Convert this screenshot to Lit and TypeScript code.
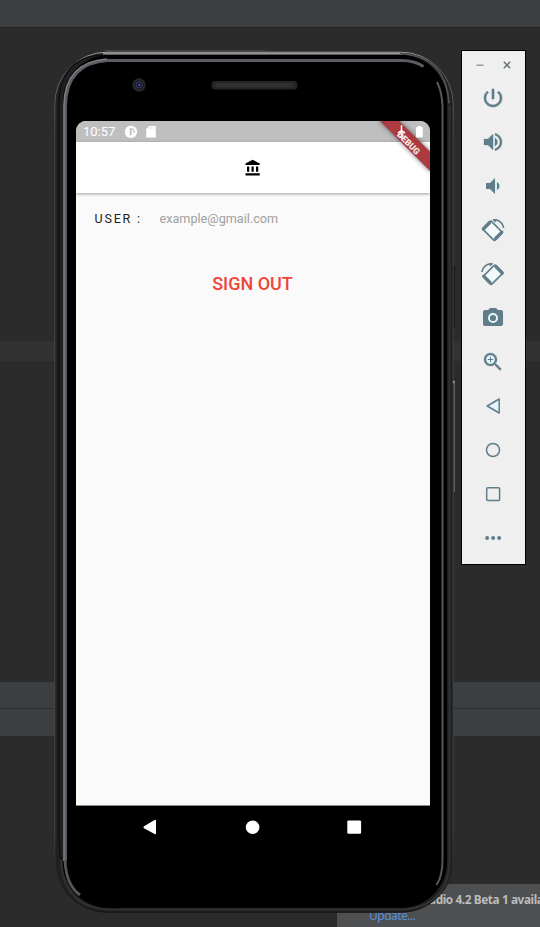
import { LitElement, html, css, svg } from "lit";
import { customElement, property } from "lit/decorators.js";

const ICONS: Record<string, unknown> = {
  power: svg`<path stroke="currentColor" stroke-width=".6" d="M13 3h-2v10h2V3zm4.83 2.17l-1.42 1.42C17.99 7.86 19 9.81 19 12c0 3.87-3.13 7-7 7s-7-3.13-7-7c0-2.19 1.01-4.14 2.58-5.42L6.17 5.17C4.23 6.82 3 9.26 3 12c0 4.97 4.03 9 9 9s9-4.03 9-9c0-2.74-1.23-5.18-3.17-6.83z"/>`,
  volumeUp: svg`<path fill="#d5f1fb" d="M12 5h2v14h-2z"/><path stroke="currentColor" stroke-width=".3" d="M3 9v6h4l5 5V4L7 9H3zm13.5 3c0-1.77-1.02-3.29-2.5-4.03v8.05c1.48-.73 2.5-2.25 2.5-4.02zM14 3.23v2.06c2.89.86 5 3.54 5 6.71s-2.11 5.85-5 6.71v2.06c4.01-.91 7-4.49 7-8.77s-2.99-7.86-7-8.77z"/>`,
  volumeDown: svg`<path fill="#d5f1fb" d="M14 7h2v10h-2z"/><path d="M18.5 12c0-1.77-1.02-3.29-2.5-4.03v8.05c1.48-.73 2.5-2.25 2.5-4.02zM5 9v6h4l5 5V4L9 9H5z"/>`,
  rotateLeft: svg`<g fill="none" stroke="currentColor"><rect x="3" y="6.9" width="17" height="11.6" rx="1.6" transform="rotate(45 11.5 12.7)" fill="#f4fafc" stroke-width="1.7"/><path d="M2.3 11.2 8.6 4.9M14.6 20.5 20.9 14.2" stroke-width="3.2" stroke-linecap="round"/><path d="M12.4 1.7c5.4-.3 9.6 3.4 10.3 8.3" stroke-width="1.6"/><path d="M11.3 1.2l4.6.4-1.6 2.9z" fill="currentColor" stroke="none"/></g>`,
  camera: svg`<circle cx="12" cy="12" r="5.6" fill="#e9f8fd"/><path fill-rule="evenodd" d="M9 2 7.17 4H4c-1.1 0-2 .9-2 2v12c0 1.1.9 2 2 2h16c1.1 0 2-.9 2-2V6c0-1.1-.9-2-2-2h-3.17L15 2H9zm3 15a5 5 0 1 1 0-10 5 5 0 0 1 0 10z"/><circle cx="12" cy="12" r="3.1"/>`,
  zoom: svg`<circle cx="9.5" cy="9.5" r="5" fill="#e2f5fc"/><path stroke="currentColor" stroke-width=".3" d="M15.5 14h-.79l-.28-.27C15.41 12.59 16 11.11 16 9.5 16 5.91 13.09 3 9.5 3S3 5.91 3 9.5 5.91 16 9.5 16c1.61 0 3.09-.59 4.23-1.57l.27.28v.79l5 4.99L20.49 19l-4.99-5zm-6 0C7.01 14 5 11.99 5 9.5S7.01 5 9.5 5 14 7.01 14 9.5 11.99 14 9.5 14z"/><path d="M9.5 6.8v5.4M6.8 9.5h5.4" stroke="currentColor" stroke-width="1"/>`,
  back: svg`<path d="M6.2 12 18.2 5v14z" fill="#e2f5fc" stroke="currentColor" stroke-width="1.5" stroke-linejoin="round"/>`,
  home: svg`<circle cx="12" cy="12" r="6.5" fill="none" stroke="currentColor" stroke-width="1.5"/>`,
  overview: svg`<rect x="5.7" y="5.7" width="12.9" height="12.9" rx="1" fill="none" stroke="currentColor" stroke-width="1.5"/>`,
  more: svg`<circle cx="6.1" cy="12" r="2"/><circle cx="12.1" cy="12" r="2"/><circle cx="18.1" cy="12" r="2"/>`,
  bank: svg`<path d="M4 10v7h3v-7H4zm6 0v7h3v-7h-3zM2 22h19v-3H2v3zm14-12v7h3v-7h-3zm-4.5-9L2 6v2h19V6l-9.5-5z"/>`,
};
ICONS.rotateRight = svg`<g transform="matrix(-1 0 0 1 23.6 0)">${ICONS.rotateLeft}</g>`;

@customElement("ui-icon")
class UiIcon extends LitElement {
  @property() name = "";
  static styles = css`
    :host { display: block; width: 24px; height: 24px; }
    svg { display: block; width: 100%; height: 100%; fill: currentColor; overflow: visible; }
  `;
  render() {
    return html`<svg viewBox="0 0 24 24">${ICONS[this.name]}</svg>`;
  }
}

@customElement("emulator-toolbar")
class EmulatorToolbar extends LitElement {
  static styles = css`
    :host {
      display: block; box-sizing: border-box; width: 65px; height: 515px;
      border: 1px solid #000; background: #efefef; color: #607d8a;
    }
    .window { display: flex; height: 29px; }
    .window svg { display: block; width: 63px; height: 29px; fill: none; stroke: #607078; stroke-width: 1.4; }
    .tools { display: flex; flex-direction: column; align-items: flex-start; gap: 20px; padding: 6px 0 0 19px; }
  `;
  render() {
    const tools = ["power", "volumeUp", "volumeDown", "rotateLeft", "rotateRight", "camera", "zoom", "back", "home", "overview", "more"];
    return html`
      <div class="window">
        <svg viewBox="0 0 63 29"><path stroke="#8a979c" d="M14.5 14.2h7"/><path d="m41.8 10.8 6.4 6.4m0-6.4-6.4 6.4"/></svg>
      </div>
      <div class="tools">${tools.map((t) => html`<ui-icon name=${t}></ui-icon>`)}</div>
    `;
  }
}

@customElement("phone-screen")
class PhoneScreen extends LitElement {
  static styles = css`
    :host {
      display: flex; flex-direction: column; position: relative; width: 354px; height: 727px;
      border-radius: 10px 10px 0 0; overflow: hidden; background: #fafafa;
      font-family: Roboto, sans-serif;
    }
    .status { display: flex; align-items: center; height: 21px; flex: none; padding: 0 7px; background: #bfbfbf; color: #fff; }
    .time { width: 42px; font-size: 13px; line-height: 21px; white-space: nowrap; }
    .status svg { display: block; height: 21px; width: 34px; }
    .appbar {
      display: flex; justify-content: center; align-items: center; flex: none; height: 51px;
      background: #fff; box-shadow: 0 1px 3px rgba(0,0,0,.38); color: #000; z-index: 1;
    }
    .appbar ui-icon { width: 18px; height: 18px; margin-right: 1px; }
    .content { flex: 1; display: flex; flex-direction: column; border-bottom: 1px solid #8b8b8b; }
    .user { display: flex; align-items: baseline; padding: 17.5px 0 0 18.5px; line-height: 16px; }
    .label { width: 65px; font-size: 12.5px; letter-spacing: 1.8px; color: #222; white-space: nowrap; }
    .email { font-size: 12.65px; color: #a0a0a0; }
    .signout { text-align: center; padding: 46px 1px 0 0; font-size: 18px; line-height: 22px; font-weight: 500; color: #f04438; }
    .nav { display: flex; flex: none; height: 42px; background: #000; }
    .nav svg { width: 354px; height: 42px; fill: #fff; }
    .banner { position: absolute; right: 0; top: 0; width: 60px; height: 60px; z-index: 2; }
    .debug { font: 900 8.8px Roboto, sans-serif; fill: #f6e6e6; }
    .shadow { filter: drop-shadow(0 0 2.5px rgba(0,0,0,.55)); }
  `;
  render() {
    return html`
      <div class="status">
        <span class="time">10:57</span>
        <svg viewBox="0 0 34 21">
          <circle cx="5.9" cy="10.9" r="6.2" fill="#fff"/>
          <path d="M4.8 7.6h1.8v6.6H4.8z" fill="#bfbfbf"/><path d="M4.8 7.6h4v1.5h-4zM8 9.6h2v1.9H8z" fill="#bfbfbf"/>
          <path d="M24.2 5h5.4q1.2 0 1.2 1.2v9.2q0 1.2-1.2 1.2h-7.2q-1.2 0-1.2-1.2V8z" fill="#fff"/>
          <path d="M24.8 6.1v1.8m1.8-1.8v1.8m1.8-1.8v1.8" stroke="#d2d2d2" stroke-width=".8"/>
        </svg>
      </div>
      <div class="appbar"><ui-icon name="bank"></ui-icon></div>
      <div class="content">
        <div class="user"><span class="label">USER :</span><span class="email">example@gmail.com</span></div>
        <div class="signout">SIGN OUT</div>
      </div>
      <div class="nav">
        <svg viewBox="0 0 354 42">
          <path d="M68 20.2 78.6 14q1.4-.6 1.4.8v12.4q0 1.4-1.4.8L68 22.2q-1.3-1 0-2z"/>
          <circle cx="176.6" cy="21.2" r="6.8"/>
          <rect x="271.3" y="14.4" width="13.8" height="13.4" rx="1.2"/>
        </svg>
      </div>
      <svg class="banner" viewBox="0 0 60 60">
        <path class="shadow" d="M8-2H27L62 32.5v19.5z" fill="#ad3a40"/>
        <path d="M31.5 4.2v13.2M28 12.2l3.5-2.8 3.5 2.8M29.8 16.5l1.7-1.4 1.7 1.4" fill="none" stroke="#fff" stroke-width="1.5"/>
        <rect x="46" y="6" width="6.8" height="10.5" rx="1" fill="#fff"/><path d="M47.8 5h3.2v2h-3.2z" fill="#fff"/>
        <text class="debug" x="0" y="3.2" text-anchor="middle" transform="translate(38.6 22) rotate(45)">DEBUG</text>
      </svg>
    `;
  }
}

@customElement("app-root")
class AppRoot extends LitElement {
  static styles = css`
    :host { display: grid; width: 540px; height: 927px; overflow: hidden; background: #2b2b2b; }
    .ide, .device, .side { grid-area: 1 / 1; }
    .ide { display: flex; flex-direction: column; height: 927px; }
    .top { height: 28px; background: #3c3f41; border-bottom: 1px solid #242628; box-sizing: border-box; flex: none; }
    .line { margin-top: 313px; height: 20px; background: #323232; flex: none; }
    .bar { height: 27px; background: #3c3f41; border-bottom: 1px solid #2b2d2e; box-sizing: border-box; flex: none; }
    .bar.first { margin-top: 321px; }
    .bar.second { height: 28px; }
    .notice {
      margin: 147px 0 0 337px; height: 43px; box-sizing: border-box; padding: 7px 0 0 32px; background: #4d4f51;
      font: 12px/16px "Noto Sans", "Open Sans", sans-serif; color: #bcbcbc; white-space: nowrap; overflow: hidden;
    }
    .notice b { display: block; font-size: 11.8px; letter-spacing: -.4px; margin-left: 2px; }
    .notice a { display: block; color: #5a8fd6; letter-spacing: -.5px; padding-top: 1px; }
    .device { display: grid; width: 402px; height: 864px; margin: 50px 0 0 53px; }
    .device > * { grid-area: 1 / 1; }
    .frame { display: block; width: 402px; height: 864px; }
    .device phone-screen { margin: 71px 0 0 23px; }
    .side { margin: 50px 0 0 461px; }
  `;
  render() {
    return html`
      <div class="ide">
        <div class="top"></div>
        <div class="line"></div>
        <div class="bar first"></div>
        <div class="bar second"></div>
        <div class="notice"><b>Android Studio 4.2 Beta 1 available</b><a>Update...</a></div>
      </div>
      <div class="device">
        <svg class="frame" viewBox="53 50 402 864" fill="none">
          <defs>
            <linearGradient id="rim" x1="0" y1="0" x2="0" y2="1">
              <stop offset="0" stop-color="#a5a5a9"/><stop offset=".012" stop-color="#6d6e71"/>
              <stop offset=".1" stop-color="#454547"/><stop offset=".9" stop-color="#444"/><stop offset="1" stop-color="#151515"/>
            </linearGradient>
          </defs>
          <rect x="55" y="51.5" width="398.5" height="861" rx="52" fill="#202021"/>
          <rect x="54.8" y="52.2" width="398.4" height="860" rx="52" stroke="url(#rim)"/>
          <path d="M105 50.9h160" stroke="#555"/>
          <path d="M59 840V105q0-50 48-50M59 840q2 69 60 69" stroke="#0e0e0e" stroke-width="1.3"/>
          <path d="M103 53.4h300" stroke="#96969a" stroke-width="2"/>
          <path d="M400 53.4q46 3 49 50" stroke="#505053" stroke-width="1.8"/>
          <rect x="63" y="55" width="384" height="853" rx="46" fill="#000"/>
          <path d="M449.5 105v755q-1 48-49 49.5H113q-50 0-52-50" stroke="#303032" stroke-width="2.2"/>
          <path d="M65.5 861V105q1-42 42-44.6h294q13 0 22 6" stroke="#5c5d62" stroke-width="3"/>
          <path d="M63.9 861V105q1-43 43-46" stroke="#7b7e84" stroke-width="1.5"/>
          <path d="M65 860q1 25 15 35" stroke="#56575d" stroke-width="2.8"/>
          <path d="M437 82q5 10 5.5 24v754q0 16-6 25" stroke="#57575a" stroke-width="2"/>
          <path d="M454.5 266v61M455.3 380v113" stroke="#1a1a1a" stroke-width="1.5"/>
          <rect x="211.5" y="81" width="86" height="8.4" rx="3.5" fill="#242424"/>
          <rect x="215" y="83" width="79" height="4.6" rx="2" fill="#303030"/>
          <circle cx="139" cy="85" r="6.7" fill="#26272b"/><circle cx="139" cy="85" r="4.2" fill="#15162b"/>
          <circle cx="139" cy="85" r="2.8" stroke="#303056" stroke-width="1.2"/><circle cx="139.2" cy="85" r=".9" fill="#6668a0"/>
          <path d="M454.6 382v110" stroke="#606060" stroke-width="1.6"/><circle cx="454" cy="382" r="1.4" fill="#858585"/>
        </svg>
        <phone-screen></phone-screen>
      </div>
      <emulator-toolbar class="side"></emulator-toolbar>
    `;
  }
}
